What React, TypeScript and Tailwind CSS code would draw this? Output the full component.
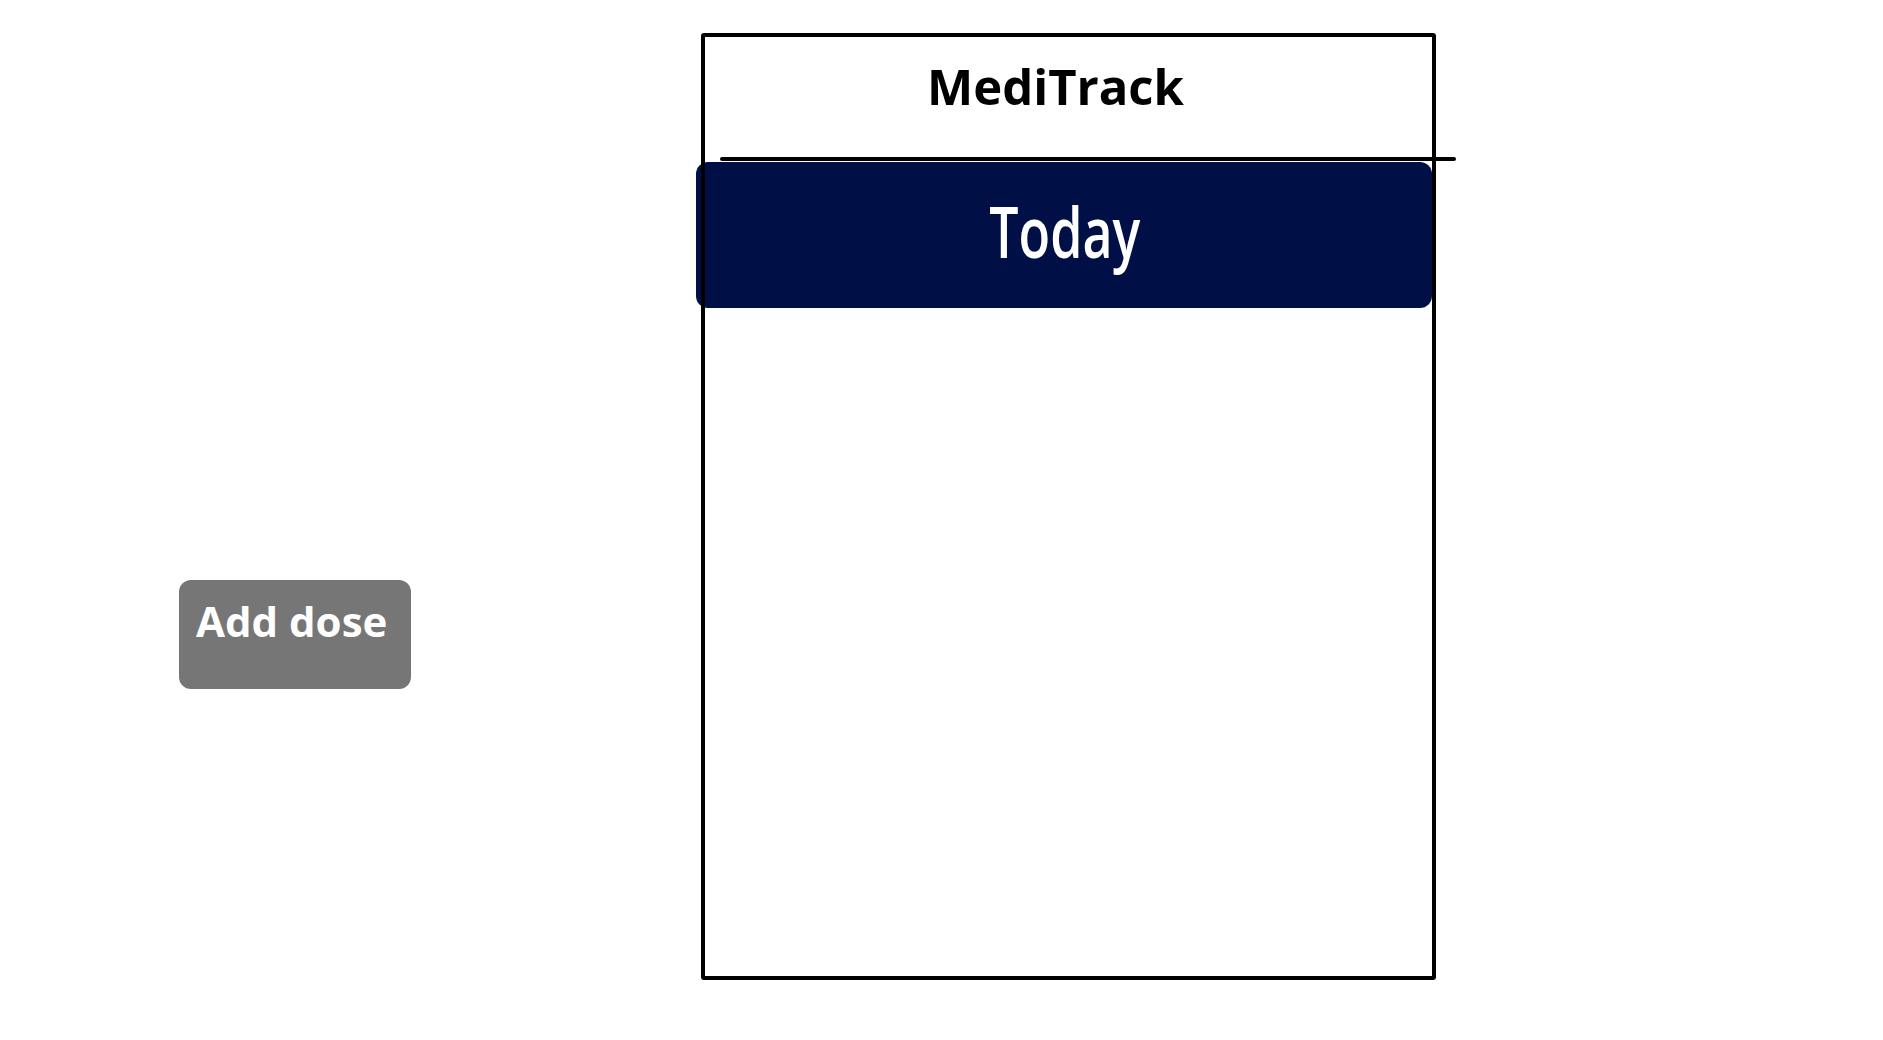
import React from "react";

export default function App() {
  return (
    <div className="w-full h-[1040px] bg-white flex items-start pl-[179px] overflow-hidden">
      <button
        type="button"
        className="mt-[580px] w-[232px] h-[109px] shrink-0 rounded-[12px] bg-[#767676] text-white text-left pl-[17px] pt-[12px] self-start flex items-start"
        style={{ fontFamily: '"Open Sans", "Noto Sans", sans-serif' }}
      >
        <span className="text-[42px] font-bold leading-[57px]">Add dose</span>
      </button>

      <div className="relative ml-[290px] mt-[33px] w-[735px] h-[947px] shrink-0">
        <div
          className="mt-[19px] h-[68px] text-center pr-[26px] text-[49px] leading-[68px] font-bold text-black"
          style={{ fontFamily: '"Open Sans", "Noto Sans", sans-serif' }}
        >
          MediTrack
        </div>
        <div className="mt-[37px] ml-[19px] w-[736px] h-[4px] bg-black rounded-full" />
        <div className="mt-[1px] -ml-[5px] w-[736px] h-[146px] rounded-[12px] bg-[#001046] flex items-center justify-center pb-[8px]">
          <span
            className="text-white text-[70px] font-semibold leading-none inline-block scale-x-[0.74] pl-[2px]"
            style={{ fontFamily: '"Open Sans", "Noto Sans", sans-serif' }}
          >
            Today
          </span>
        </div>
        <div className="pointer-events-none absolute inset-0 border-4 border-black rounded-[3px]" />
      </div>
    </div>
  );
}
